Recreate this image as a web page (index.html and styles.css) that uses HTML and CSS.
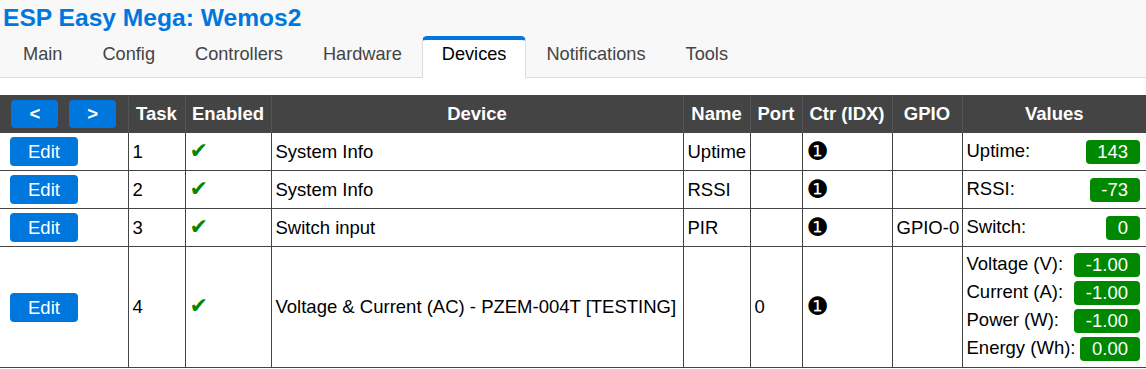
FILE: index.html
```html
<!DOCTYPE html>
<html lang="en">
<head>
<meta charset="UTF-8" />
<title>ESP Easy Mega: Wemos2</title>
<link rel="stylesheet" href="styles.css">
</head>
<body>

<div class="headermenu">
  <h1>ESP Easy Mega: Wemos2</h1>
  <div class="menubar">
    <a class="menu" href="#">Main</a>
    <a class="menu" href="#">Config</a>
    <a class="menu" href="#">Controllers</a>
    <a class="menu" href="#">Hardware</a>
    <a class="menu active" href="#">Devices</a>
    <a class="menu" href="#">Notifications</a>
    <a class="menu" href="#">Tools</a>
  </div>
</div>

<table class="multirow">
  <colgroup>
    <col class="c-edit">
    <col class="c-task">
    <col class="c-enabled">
    <col class="c-device">
    <col class="c-name">
    <col class="c-port">
    <col class="c-ctr">
    <col class="c-gpio">
    <col class="c-values">
  </colgroup>
  <tr>
    <th class="first">
      <div class="nav">
        <a class="button nav-btn" href="#">&lt;</a>
        <a class="button nav-btn" href="#">&gt;</a>
      </div>
    </th>
    <th>Task</th>
    <th>Enabled</th>
    <th>Device</th>
    <th>Name</th>
    <th>Port</th>
    <th>Ctr (IDX)</th>
    <th>GPIO</th>
    <th>Values</th>
  </tr>
  <tr>
    <td class="first"><a class="button" href="#">Edit</a></td>
    <td>1</td>
    <td><span class="enabled">&#10004;</span></td>
    <td>System Info</td>
    <td>Uptime</td>
    <td></td>
    <td><span class="ctr">&#10102;</span></td>
    <td></td>
    <td>
      <div class="vrow"><div class="div_l">Uptime:</div><div class="div_r">143</div></div>
    </td>
  </tr>
  <tr>
    <td class="first"><a class="button" href="#">Edit</a></td>
    <td>2</td>
    <td><span class="enabled">&#10004;</span></td>
    <td>System Info</td>
    <td>RSSI</td>
    <td></td>
    <td><span class="ctr">&#10102;</span></td>
    <td></td>
    <td>
      <div class="vrow"><div class="div_l">RSSI:</div><div class="div_r">-73</div></div>
    </td>
  </tr>
  <tr>
    <td class="first"><a class="button" href="#">Edit</a></td>
    <td>3</td>
    <td><span class="enabled">&#10004;</span></td>
    <td>Switch input</td>
    <td>PIR</td>
    <td></td>
    <td><span class="ctr">&#10102;</span></td>
    <td>GPIO-0</td>
    <td>
      <div class="vrow"><div class="div_l">Switch:</div><div class="div_r">0</div></div>
    </td>
  </tr>
  <tr>
    <td class="first"><a class="button" href="#">Edit</a></td>
    <td>4</td>
    <td><span class="enabled">&#10004;</span></td>
    <td>Voltage &amp; Current (AC) - PZEM-004T [TESTING]</td>
    <td></td>
    <td>0</td>
    <td><span class="ctr">&#10102;</span></td>
    <td></td>
    <td>
      <div class="vrow"><div class="div_l">Voltage (V):</div><div class="div_r">-1.00</div></div>
      <div class="vrow"><div class="div_l">Current (A):</div><div class="div_r">-1.00</div></div>
      <div class="vrow"><div class="div_l">Power (W):</div><div class="div_r">-1.00</div></div>
      <div class="vrow"><div class="div_l">Energy (Wh):</div><div class="div_r">0.00</div></div>
    </td>
  </tr>
</table>

</body>
</html>
```

FILE: styles.css
```css
body {
  margin: 0;
  font-family: "Liberation Sans", Arial, sans-serif;
  font-size: 18.5px;
  color: #000;
  background: #fff;
}
.headermenu {
  background-color: #F8F8F8;
  border-bottom: 1px solid #DDD;
  padding: 4px 0 0 3px;
}
h1 {
  font-size: 24.6px;
  line-height: 28px;
  margin: 0 0 4px;
  color: #07D;
  font-weight: bold;
}
.menubar {
  display: flex;
  height: 42px;
  margin-bottom: -1px;
}
.menu {
  padding: 4px 19px 0;
  font-size: 18.2px;
  line-height: 21px;
  color: #444;
  white-space: nowrap;
  border: solid transparent;
  border-width: 4px 1px 0;
  border-radius: 5px 5px 0 0;
  text-decoration: none;
}
.menu.active {
  color: #000;
  background-color: #FFF;
  border-color: #07D #DDD #FFF;
}

table.multirow {
  margin-top: 17px;
  border-collapse: collapse;
  table-layout: fixed;
  width: 1146px;
}
.c-edit { width: 128px; }
.c-task { width: 57px; }
.c-enabled { width: 86px; }
.c-device { width: 412px; }
.c-name { width: 67px; }
.c-port { width: 52px; }
.c-ctr { width: 90px; }
.c-gpio { width: 70px; }
.c-values { width: 184px; }

table.multirow th {
  background-color: #444;
  color: #FFF;
  font-weight: bold;
  text-align: center;
  height: 37px;
  padding: 0 2px;
  border-left: 1px solid #555;
}
table.multirow th.first {
  border-left: none;
}
table.multirow td {
  padding: 4px;
  height: 29px;
  text-align: left;
  vertical-align: middle;
  border: 1px solid #444;
  white-space: nowrap;
}
table.multirow td.first {
  border-left: none;
  padding-left: 10px;
}

.button {
  display: inline-block;
  padding: 4px 18px;
  line-height: 21px;
  background-color: #07D;
  color: #FFF;
  text-decoration: none;
  border-radius: 4px;
}
.nav {
  display: flex;
  justify-content: center;
  gap: 11px;
}
.nav-btn {
  padding: 4px 18px;
  line-height: 20px;
  font-weight: bold;
}

.enabled {
  color: #080;
  font-family: "DejaVu Sans", sans-serif;
  font-size: 22px;
  line-height: 20px;
}
.ctr {
  font-family: "DejaVu Sans", sans-serif;
  font-size: 25px;
  line-height: 20px;
  vertical-align: -2px;
}

.vrow {
  display: flex;
  justify-content: space-between;
  align-items: flex-start;
}
.div_l {
  padding-top: 2px;
  line-height: 21px;
}
.div_r {
  margin: 2px;
  padding: 1px 11.5px;
  line-height: 22px;
  border-radius: 4px;
  background-color: #080;
  color: white;
}
```
